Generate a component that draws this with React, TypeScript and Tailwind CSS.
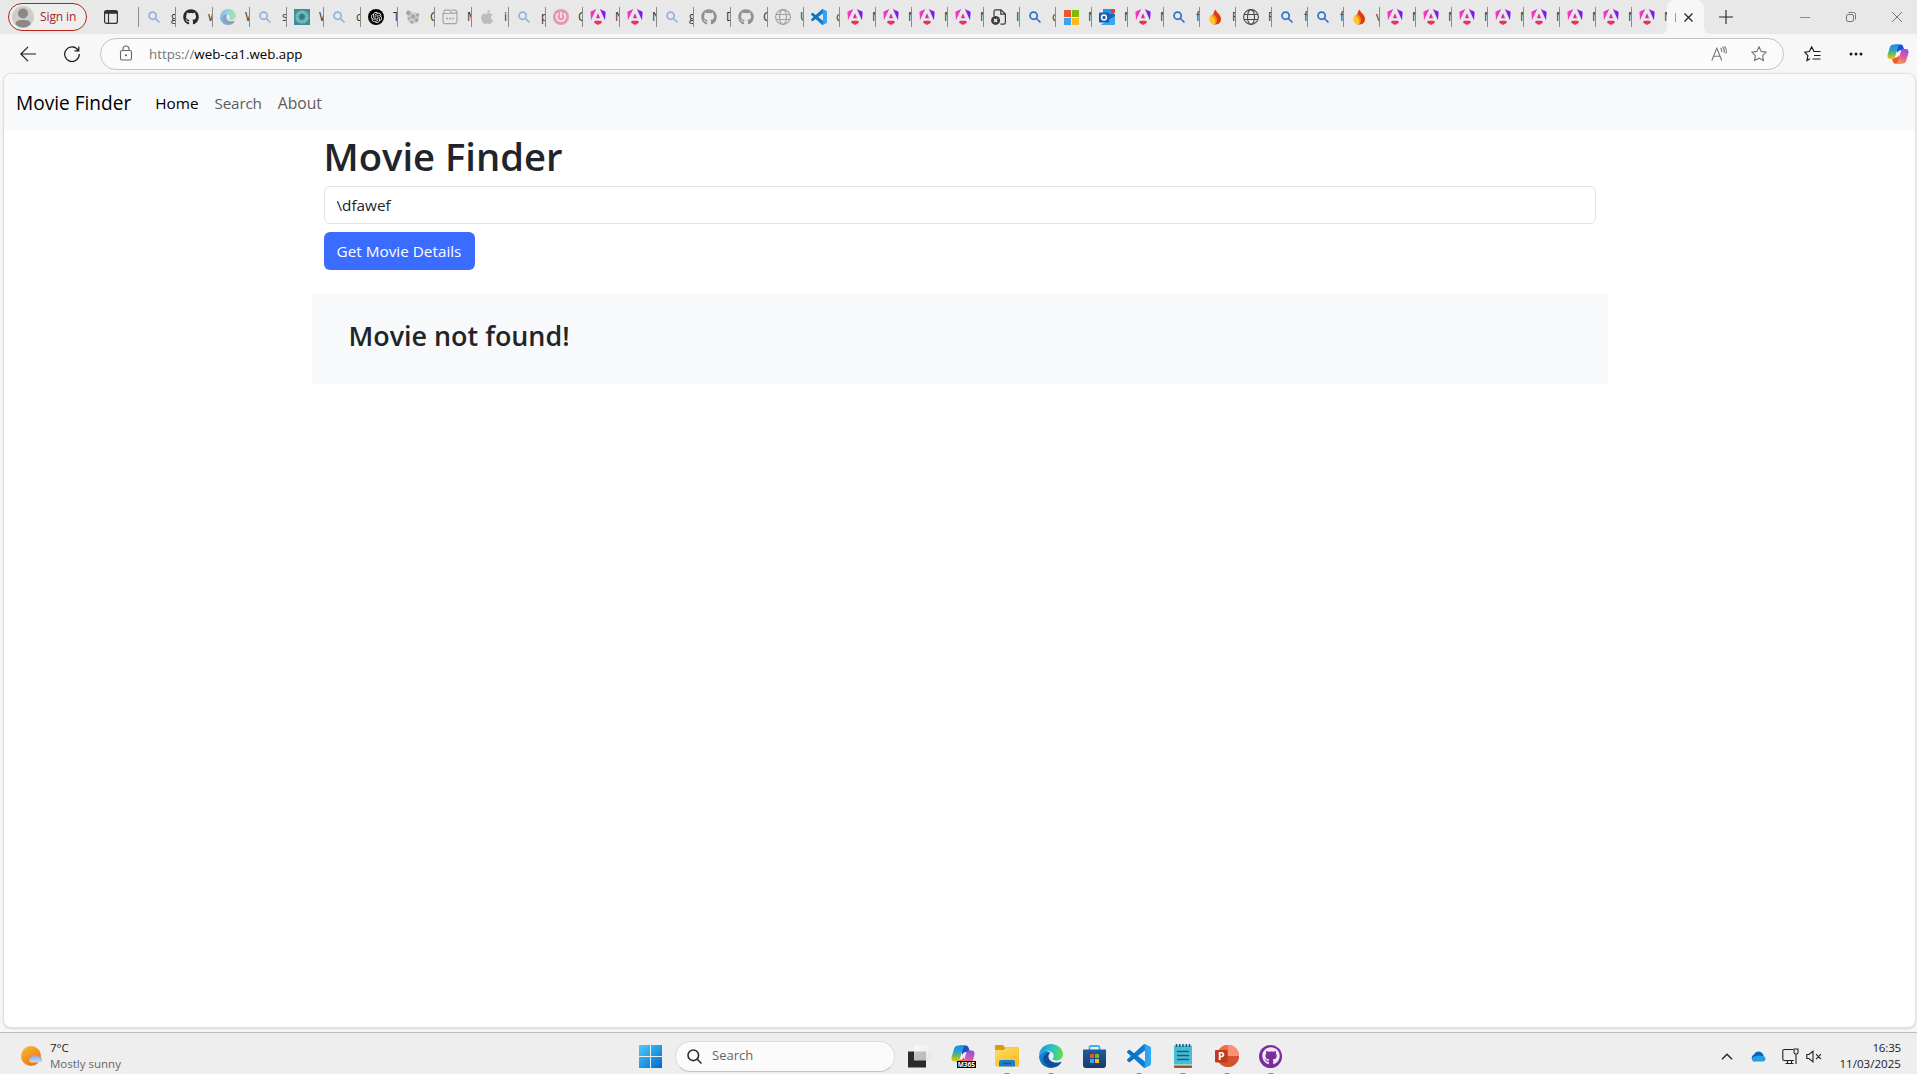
import React from "react";
import { FaGithub, FaApple } from "react-icons/fa";
import { SiOpenai } from "react-icons/si";

const Defs = () => (
  <svg width="0" height="0" className="absolute">
    <defs>
      <linearGradient id="ang" x1="0" y1="0" x2="1" y2="0">
        <stop offset="0" stopColor="#f637c2" /><stop offset="0.5" stopColor="#e62bb0" /><stop offset="0.75" stopColor="#a11df0" /><stop offset="1" stopColor="#6a0cf5" />
      </linearGradient>
      <linearGradient id="angb" x1="0" y1="0" x2="0" y2="1">
        <stop offset="0" stopColor="#c832a8" /><stop offset="1" stopColor="#f0304f" />
      </linearGradient>
      <linearGradient id="vsc" x1="0" y1="0" x2="1" y2="0">
        <stop offset="0" stopColor="#0a6fbe" /><stop offset="0.72" stopColor="#0f80cf" /><stop offset="0.76" stopColor="#2ba1f1" /><stop offset="1" stopColor="#36a9f7" />
      </linearGradient>
      <linearGradient id="edgeTop" x1="0" y1="0.3" x2="1" y2="0.4">
        <stop offset="0" stopColor="#1791d8" /><stop offset="0.5" stopColor="#2bc0cd" /><stop offset="1" stopColor="#5fdc56" />
      </linearGradient>
      <linearGradient id="edgeBot" x1="0" y1="0" x2="1" y2="1">
        <stop offset="0" stopColor="#1b93dc" /><stop offset="1" stopColor="#0c4a93" />
      </linearGradient>
      <linearGradient id="copL" x1="0" y1="0" x2="0" y2="1">
        <stop offset="0" stopColor="#1d8fe8" /><stop offset="0.4" stopColor="#2aa7c4" /><stop offset="0.7" stopColor="#7dc04a" /><stop offset="1" stopColor="#f6c21c" />
      </linearGradient>
      <linearGradient id="copR" x1="0.6" y1="0" x2="0.3" y2="1">
        <stop offset="0" stopColor="#9350e8" /><stop offset="0.5" stopColor="#e05aa4" /><stop offset="1" stopColor="#fb9c4b" />
      </linearGradient>
      <linearGradient id="win" x1="0" y1="0" x2="1" y2="1">
        <stop offset="0" stopColor="#4ccdfb" /><stop offset="1" stopColor="#0069ca" />
      </linearGradient>
      <linearGradient id="sun" x1="0.1" y1="0" x2="0.8" y2="1">
        <stop offset="0" stopColor="#f2bd35" /><stop offset="1" stopColor="#f06a12" />
      </linearGradient>
      <linearGradient id="cloud" x1="0" y1="0" x2="0" y2="1">
        <stop offset="0" stopColor="#7fa6e6" /><stop offset="1" stopColor="#c4dbfa" />
      </linearGradient>
      <linearGradient id="fold" x1="0" y1="0" x2="1" y2="1">
        <stop offset="0" stopColor="#fddb6a" /><stop offset="1" stopColor="#f9bb18" />
      </linearGradient>
      <linearGradient id="store" x1="0" y1="0" x2="0" y2="1">
        <stop offset="0" stopColor="#1d5c9e" /><stop offset="1" stopColor="#173a6b" />
      </linearGradient>
      <linearGradient id="glass" x1="0" y1="0" x2="1" y2="1">
        <stop offset="0" stopColor="#fff" stopOpacity=".75" /><stop offset="1" stopColor="#e2e2e2" stopOpacity=".75" />
      </linearGradient>
    </defs>
  </svg>
);

const Angular = () => (
  <svg viewBox="0 0 24 24" width="16" height="16">
    <path fill="url(#ang)" d="M14.692 0l7.832 16.855.814-12.856L14.692 0ZM9.308 0 .662 3.999l.814 12.856L9.308 0Z" />
    <path fill="url(#angb)" d="M16.712 17.711H7.288l-1.204 2.916L12 24l5.916-3.373-1.204-2.916ZM8.903 13.93h6.198L12 6.396 8.903 13.93Z" />
  </svg>
);
const Code = ({ size = 16 }: { size?: number }) => (
  <svg viewBox="0 0 24 24" width={size} height={size}>
    <path fill="url(#vsc)" d="M23.15 2.587L18.21.21a1.494 1.494 0 0 0-1.705.29l-9.46 8.63-4.12-3.128a.999.999 0 0 0-1.276.057L.327 7.261A1 1 0 0 0 .326 8.74L3.899 12 .326 15.26a1 1 0 0 0 .001 1.479L1.65 17.94a.999.999 0 0 0 1.276.057l4.12-3.128 9.46 8.63a1.492 1.492 0 0 0 1.704.29l4.942-2.377A1.5 1.5 0 0 0 24 20.06V3.939a1.5 1.5 0 0 0-.85-1.352zm-5.146 14.861L10.826 12l7.178-5.448v10.896z" />
  </svg>
);
const Edge = ({ size = 16 }: { size?: number }) => (
  <svg viewBox="0 0 24 24" width={size} height={size}>
    <path fill="url(#edgeBot)" d="M0 12C0 19 5.500 24 12 24c4.400 0 8.200-2.100 10.300-5.400.3-.5-.2-.9-.7-.7-5.600 2.400-12.300-.4-12.300-5.700 0-1.500.8-2.700 1.900-3.500C8 5.500 1.500 6.500 0 12z" />
    <path fill="url(#edgeTop)" d="M0 11.500C.3 5 5.500 0 12 0c7.200 0 12 5.200 12 10.200 0 3.800-3 6.300-6.600 6.300-2.300 0-3.800-.7-3.800-1.500 0-.7 1.100-1 1.100-3 0-2.700-2.800-5.200-6.900-5.200C4 6.800.5 9 0 11.500z" />
    <path fill="#0d4f9e" d="M4.300 14.800c.3-4 3-6.500 6.900-6.100-1.200.8-1.900 2-1.900 3.500 0 5.300 6.700 8.100 12.300 5.700-3 5.500-10 6.300-13.600 3.200-2.300-1.700-3.600-3.900-3.700-6.300z" />
  </svg>
);
const Mag = () => (
  <svg viewBox="0 0 16 16" width="16" height="16" fill="none" stroke="#2f6fd0" strokeWidth="1.7" strokeLinecap="round">
    <circle cx="6.600" cy="6.700" r="3.600" /><path d="M9.400 9.500l3.600 3.500" />
  </svg>
);
const Globe = () => (
  <svg viewBox="0 0 16 16" width="16" height="16" fill="none" stroke="#4a4a4a" strokeWidth="1.100">
    <circle cx="8" cy="8" r="7.400" /><ellipse cx="8" cy="8" rx="3.500" ry="7.400" /><path d="M1.200 5.500h13.600M1.200 10.500h13.600" />
  </svg>
);
const Teal = () => (
  <svg viewBox="0 0 16 16" width="16" height="16">
    <rect width="16" height="16" fill="#3f8c98" />
    <circle cx="8" cy="8" r="5" fill="none" stroke="#8fc9cc" strokeWidth="3.200" strokeDasharray="1.100 .5" />
    <path d="M8 5.500a2 2 0 0 1 1 3.700L8 11l-1-1.800a2 2 0 0 1 1-3.700z" fill="#2d7683" />
  </svg>
);
const OpenAI = () => (
  <span className="flex size-4 shrink-0 items-center justify-center rounded-full bg-black text-white"><SiOpenai size={11} /></span>
);
const Ball = () => (
  <svg viewBox="0 0 16 16" width="16" height="16" fill="#555">
    <circle cx="8" cy="9" r="6" fill="#b5b5b5" /><circle cx="3.500" cy="4" r="2.400" /><circle cx="8" cy="7.500" r="2.300" /><circle cx="12.500" cy="6" r="1.800" /><circle cx="4" cy="9.500" r="1.300" /><circle cx="11.500" cy="11" r="1.900" /><circle cx="7" cy="13" r="1.600" />
  </svg>
);
const Site = () => (
  <svg viewBox="0 0 16 16" width="16" height="16" fill="none" stroke="#555" strokeWidth="1.200">
    <path d="M1.800 4.500V3a2 2 0 0 1 2-1.800H8l1.500 3h5M15 5v7.200a2.500 2.500 0 0 1-2.500 2.500h-9A2.500 2.500 0 0 1 1 12.200V4.500h8.500M9.500 1.200h3A2.500 2.500 0 0 1 15 3.700V6" />
    <path d="M4 9.500h2M7 9.500h2M10 9.500h2" strokeWidth="1.600" />
  </svg>
);
const Pink = () => (
  <svg viewBox="0 0 16 16" width="16" height="16">
    <circle cx="8" cy="8" r="8" fill="#e8357a" />
    <path d="M5.400 4.300a4.400 4.400 0 1 0 5.200 0M8 3v6" fill="none" stroke="#fff" strokeWidth="1.600" />
  </svg>
);
const DocX = () => (
  <svg viewBox="0 0 16 16" width="16" height="16" fill="none" stroke="#3b3b3b" strokeWidth="1.200">
    <path d="M3 7V2.500A1.800 1.800 0 0 1 4.800.8H10L14.400 5v8.500a1.800 1.800 0 0 1-1.800 1.700H9.500M9.800 1v4.200h4.400" />
    <circle cx="4.600" cy="11.400" r="4.500" fill="#3b3b3b" stroke="none" /><path d="M3 9.800l3.200 3.200M6.200 9.800L3 13" stroke="#fff" />
  </svg>
);
const MS = () => (
  <svg viewBox="0 0 15 15" width="15" height="15">
    <path fill="#f05427" d="M0 0h7v7H0z" /><path fill="#80bb0c" d="M8 0h7v7H8z" /><path fill="#3fa2ee" d="M0 8h7v7H0z" /><path fill="#fcba1c" d="M8 8h7v7H8z" />
  </svg>
);
const Outlook = () => (
  <svg viewBox="0 0 16 16" width="16" height="16">
    <path fill="#2f92e0" d="M4 0h11v12H4z" /><path fill="#1b66b4" d="M9 5h7v5l-7 4z" /><path fill="#3aa8ef" d="M2 15.500L16 7v7.500a1.300 1.300 0 0 1-1.300 1.500H3z" />
    <rect y="3.500" width="10" height="10" rx="1" fill="#1c5bab" /><circle cx="5" cy="8.500" r="2.400" fill="none" stroke="#fff" strokeWidth="1.500" />
    <circle cx="14" cy="2" r="2.200" fill="#d8413a" />
  </svg>
);
const Fire = () => (
  <svg viewBox="0 0 16 16" width="16" height="16">
    <path fill="#dd3a13" d="M8 .5c1.500 1.500 1.500 2.300 2.800 3.500C13 6 14 8 14 10a5.500 5.500 0 0 1-8 5C3 10 6 7 8 .5z" />
    <path fill="#f8851b" d="M6.500 5C9 7 10.500 9.500 10 12c-.2 1.700-1.200 3-2.500 3.500L3 12l1-5z" /><path fill="#fcc52d" d="M4 6.500c3 1 5 4.500 4 9A5.700 5.700 0 0 1 2.200 10c0-1.500.8-2.700 1.800-3.500z" />
  </svg>
);

const icons: Record<string, React.ReactNode> = {
  mag: <Mag />, git: <FaGithub size={16} color="#24292f" />, edge: <Edge />, teal: <Teal />, ai: <OpenAI />, ball: <Ball />, site: <Site />,
  apple: <FaApple size={16} color="#888" />, pink: <Pink />, ang: <Angular />, globe: <Globe />, code: <Code />, doc: <DocX />, ms: <MS />, out: <Outlook />, fire: <Fire />,
};

// [icon, visible title, sleeping]
const wide: [string, string, boolean][] = [
  ["mag", "g", true], ["git", "w", false], ["edge", "W", true], ["mag", "s", true], ["teal", "W", false], ["mag", "c", true], ["ai", "T", false],
  ["ball", "C", true], ["site", "M", true], ["apple", "ii", true], ["mag", "p", true], ["pink", "C", true], ["ang", "N", false], ["ang", "N", false],
  ["mag", "g", true], ["git", "D", true], ["git", "C", true],
];
const slim: [string, string, boolean][] = [
  ["globe", "U", true], ["code", "c", false], ["ang", "N", false], ["ang", "N", false], ["ang", "N", false], ["ang", "N", false], ["doc", "I", false],
  ["mag", "c", false], ["ms", "N", false], ["out", "N", false], ["ang", "N", false], ["mag", "f", false], ["fire", "F", false], ["globe", "F", false],
  ["mag", "f", false], ["mag", "f", false], ["fire", "v", false], ["ang", "N", false], ["ang", "N", false], ["ang", "N", false], ["ang", "N", false],
  ["ang", "N", false], ["ang", "N", false], ["ang", "N", false], ["ang", "N", false],
];

const Tab = ({ t, width, last }: { t: [string, string, boolean]; width: string; last?: boolean }) => (
  <div className={`flex h-5 shrink-0 items-center overflow-hidden border-r pl-[7px] ${last ? "border-transparent" : "border-[#8a8a8a]"} ${width}`}>
    <span className={`flex w-4 shrink-0 justify-center ${t[2] ? "opacity-45" : ""}`}>{icons[t[0]]}</span>
    <span className="ml-[9px] shrink-0 text-[12px] leading-5 text-[#333]">{t[1]}</span>
  </div>
);

const Copilot = ({ size }: { size: number }) => (
  <svg viewBox="0 0 24 24" width={size} height={size}>
    <path fill="#1e4fd0" d="M9 1.500h6c1.500 0 2.200 1 2.600 2.300L19 8h-4c-2 0-3 1-3.500 3z" />
    <path fill="#ee5a2c" d="M15 22.500H9c-1.500 0-2.200-1-2.600-2.300L5 16h4c2 0 3-1 3.500-3z" />
    <path fill="url(#copL)" d="M7.500 1.500H15c-1.500 0-2.300 1-2.800 2.600L8.600 15.500c-.4 1.300-1.100 2-2.500 2H3.500C1 17.500 0 15.500.6 13L3 5c.7-2.300 2-3.500 4.500-3.500z" />
    <path fill="url(#copR)" d="M16.500 22.500H9c1.500 0 2.300-1 2.800-2.600l3.600-11.400c.4-1.300 1.100-2 2.500-2h2.600c2.500 0 3.500 2 2.900 4.500L21 19c-.7 2.300-2 3.500-4.500 3.500z" />
  </svg>
);

const TabStrip = () => (
  <div className="flex h-[34px] items-center bg-[#e8e8e8]">
    <div className="ml-2 flex h-7 w-[79px] shrink-0 items-center rounded-full border border-[#b3261e] bg-[#efeeee] pl-[3px]">
      <svg viewBox="0 0 22 22" width="22" height="22"><circle cx="11" cy="11" r="11" fill="#cfcdca" /><circle cx="11" cy="7.500" r="5" fill="#8c8883" /><path d="M3.500 18.500c0-3.500 2-4.500 7.500-4.500s7.500 1 7.500 4.500a11 11 0 0 1-15 0z" fill="#8c8883" /></svg>
      <span className="ml-[6px] text-[12px] tracking-[-0.1px] text-[#a4262c]">Sign in</span>
    </div>
    <svg viewBox="0 0 14 14" width="14" height="14" className="ml-[17px] shrink-0" fill="none" stroke="#333" strokeWidth="1.200"><rect x=".6" y=".6" width="12.800" height="12.800" rx="2" /><path d="M.6 2.300h12.800" strokeWidth="3" /><path d="M4.500 3v10.500" /></svg>
    <div className="ml-5 flex items-center border-l border-[#8a8a8a]">
      {wide.map((t, i) => <Tab key={i} t={t} width="w-[37px]" />)}
      {slim.map((t, i) => <Tab key={i} t={t} width="w-[36px]" last={i === slim.length - 1} />)}
    </div>
    <div className="relative -ml-px flex h-[34px] w-[37px] shrink-0 items-center rounded-t-lg bg-[#f7f7f7]">
      <svg className="absolute bottom-0 -left-[6px]" width="6" height="6"><path d="M6 0v6H0a6 6 0 0 0 6-6z" fill="#f7f7f7" /></svg>
      <svg className="absolute bottom-0 -right-[6px]" width="6" height="6"><path d="M0 0v6h6a6 6 0 0 1-6-6z" fill="#f7f7f7" /></svg>
      <span className="ml-2 h-[9px] w-px bg-[#999]" />
      <svg className="ml-[8px]" width="9" height="9" stroke="#222" strokeWidth="1.200"><path d="M.5.5l8 8M8.500.5l-8 8" /></svg>
    </div>
    <svg className="ml-[15px] shrink-0" width="14" height="14" stroke="#222" strokeWidth="1.100"><path d="M7 0v14M0 7h14" /></svg>
    <div className="ml-auto mr-[15px] flex shrink-0 items-center gap-9">
      <svg width="10" height="10" stroke="#888" strokeWidth="1"><path d="M0 5.500h10" /></svg>
      <svg width="10" height="10" stroke="#777" fill="none"><rect x=".5" y="2.500" width="7" height="7" rx="1.500" /><path d="M2.500.5h5a2 2 0 0 1 2 2v5" /></svg>
      <svg width="10" height="10" stroke="#777"><path d="M0 0l10 10M10 0L0 10" /></svg>
    </div>
  </div>
);

const star = "M8 .8l2.200 4.600 5 .7-3.600 3.500.9 5L8 12.200l-4.500 2.400.9-5L.8 6.100l5-.7z";

const Toolbar = () => (
  <div className="flex h-[39px] items-center bg-[#f7f7f7]">
    <svg className="ml-5 shrink-0" width="16" height="16" fill="none" stroke="#1b1b1b" strokeWidth="1.200"><path d="M16 8H1M8 .8L.8 8 8 15.200" /></svg>
    <svg className="ml-7 shrink-0" width="16" height="16" fill="none" stroke="#1b1b1b" strokeWidth="1.200"><path d="M14.300 4.500A7.300 7.300 0 1 0 15.300 8M14.800.5v4.300h-4.300" /></svg>
    <div className="ml-5 flex h-8 w-[1684px] shrink-0 items-center rounded-full border border-[#c3c3c3] bg-[#fbfbfb]">
      <svg className="ml-[18px] -mt-px" width="14" height="16" fill="none" stroke="#666" strokeWidth="1.100"><rect x="1.500" y="5.500" width="11" height="9.500" rx="1.500" /><path d="M4 5.500V4a3 3 0 0 1 6 0v1.500" /><circle cx="7" cy="10.300" r=".5" fill="#666" /></svg>
      <span className="ml-4 text-[13.3px] leading-5 text-black"><span className="text-[#767676]">https://</span>web-ca1.web.app</span>
      <svg className="ml-auto" width="16" height="16" fill="none" stroke="#767676" strokeWidth="1.100"><path d="M.8 14.500L5.800 2.200l5 12.300M2.500 10.300h6.600M9.500 1.800c1 1 1.300 2.400 1 4M11.500.8c1.600 1.600 2 4 1.400 6.200M13.300.2c2 2 2.500 4.600 1.700 7.500" /></svg>
      <svg className="ml-6 mr-4" width="16" height="16" fill="none" stroke="#767676" strokeWidth="1.100"><path d={star} /></svg>
    </div>
    <svg className="ml-5 shrink-0" width="17" height="16" fill="none" stroke="#1b1b1b" strokeWidth="1.200"><path d="M6 12.800l-3 1.700.9-4.900L.7 6.200l4.700-.7L7.700.9 10 5.500h6.500M10 9.500h6.500M8.500 13h8" /></svg>
    <svg className="ml-7 shrink-0" width="14" height="4" fill="#1b1b1b"><circle cx="2" cy="2" r="1.500" /><circle cx="7" cy="2" r="1.500" /><circle cx="12" cy="2" r="1.500" /></svg>
    <span className="ml-6 shrink-0"><Copilot size={22} /></span>
  </div>
);

const Slot = ({ children, run }: { children: React.ReactNode; run?: boolean }) => (
  <div className="relative flex h-[42px] w-11 shrink-0 items-center justify-center pt-[5px]">
    {children}
    {run && <span className="absolute bottom-0 left-[19px] h-[2px] w-[6px] rounded-t bg-[#868686]" />}
  </div>
);

const Taskbar = () => (
  <div className="relative flex h-[42px] items-center justify-between overflow-hidden border-t border-[#bdbdbd] bg-[#eeeeee]">
    <div className="flex w-[628px] items-center pl-[21px] pt-[5px]">
      <svg width="22" height="21" viewBox="0 0 22 21"><circle cx="10" cy="10" r="10" fill="url(#sun)" /><path d="M10.500 16.500a2.500 2.500 0 0 1 .3-5A4 4 0 0 1 18 10.800a2.900 2.900 0 0 1 1 5.700z" fill="url(#cloud)" /></svg>
      <div className="ml-[7px] flex flex-col text-[11.5px] leading-4">
        <span className="text-[#1b1b1b]">7°C</span>
        <span className="text-[#666]">Mostly sunny</span>
      </div>
    </div>
    <div className="flex flex-1 items-center">
      <Slot><svg width="23" height="23" fill="url(#win)"><path d="M0 0h11v11H0zM12 0h11v11H12zM0 12h11v11H0zM12 12h11v11H12z" /></svg></Slot>
      <div className="ml-[3px] mt-[5px] flex h-[31px] w-[220px] items-center rounded-full border border-[#dcdcdc] border-b-[#c4c4c4] bg-[#fbfbfb] pl-[11px]">
        <svg width="15" height="15" fill="none" stroke="#2b2b2b" strokeWidth="1.600" strokeLinecap="round"><circle cx="6.300" cy="6.300" r="5.300" /><path d="M10.300 10.300l3.700 3.700" /></svg>
        <span className="ml-[10px] text-[13px] text-[#666]">Search</span>
      </div>
      <div className="ml-[2px] flex">
        <Slot><svg width="24" height="23" className="ml-[2px]"><path d="M0 6.500h18v16H0z" fill="#2b2b2b" /><path d="M6 .5h18v15H6z" fill="url(#glass)" /></svg></Slot>
        <Slot>
          <div className="relative size-6"><Copilot size={24} /><span className="absolute -right-px bottom-0 bg-black px-px text-[6.500px] font-bold leading-[7px] text-white">M365</span></div>
        </Slot>
        <Slot run><svg width="24" height="22"><path d="M0 1a1 1 0 0 1 1-1h7l2 2.500h13a1 1 0 0 1 1 1V8H0z" fill="#dd9a0b" /><path d="M0 5h8.500L11 2.700h12a1 1 0 0 1 1 1V20.500a1 1 0 0 1-1 1H1a1 1 0 0 1-1-1z" fill="url(#fold)" /><path d="M4 21.500V17a2 2 0 0 1 2-2h12a2 2 0 0 1 2 2v4.500z" fill="#1c7cd0" /><path d="M8 18.500h8" stroke="#0e5aa0" strokeWidth="1.500" /></svg></Slot>
        <Slot run><Edge size={24} /></Slot>
        <Slot><svg width="23" height="23" className="-ml-px"><path d="M6.500 6V2.500A1.500 1.500 0 0 1 8 1h7a1.500 1.500 0 0 1 1.500 1.500V6" fill="none" stroke="#35b4ee" strokeWidth="1.800" /><path d="M0 4.500h23V20a3 3 0 0 1-3 3H3a3 3 0 0 1-3-3z" fill="url(#store)" /><path d="M7 9h4v4H7z" fill="#f25022" /><path d="M12 9h4v4h-4z" fill="#7fba00" /><path d="M7 14h4v4H7z" fill="#35a9f0" /><path d="M12 14h4v4h-4z" fill="#ffb900" /></svg></Slot>
        <Slot run><Code size={24} /></Slot>
        <Slot run><svg width="20" height="24"><rect x="1" y="1.500" width="18" height="20" rx="1" fill="#46bcd6" /><path d="M3.500 0v3M6.800 0v3M10 0v3M13.300 0v3M16.500 0v3" stroke="#14607b" strokeWidth="1.500" /><path d="M4 7.500h12M4 11.500h12M4 15.500h12" stroke="#14607b" strokeWidth="1.600" /><path d="M1 20.500h18v1H1z" fill="#e6f4f8" /><path d="M1 21.500h18V23a1 1 0 0 1-1 1H2a1 1 0 0 1-1-1z" fill="#a3501c" /></svg></Slot>
        <Slot run><svg width="24" height="22"><circle cx="13" cy="11" r="11" fill="#e0532f" /><path d="M13 0a11 11 0 0 1 11 11H13z" fill="#fb9275" /><path d="M13 11h11a11 11 0 0 1-21 4.500z" fill="#d35230" /><path d="M13 0v11H2A11 11 0 0 1 13 0z" fill="#ee6c47" /><rect y="5" width="12.500" height="12.500" rx="1" fill="#c13b1b" /><text x="3" y="15" fontSize="10.500" fontWeight="700" fill="#fff" fontFamily="Open Sans">P</text></svg></Slot>
        <Slot run><span className="-ml-px flex size-[23px] items-center justify-center rounded-full bg-[#7b2d9e]"><FaGithub size={18} color="#f3e8f8" /></span></Slot>
      </div>
    </div>
    <div className="flex items-center pr-4 pt-[5px]">
      <svg width="12" height="7" fill="none" stroke="#222" strokeWidth="1.400"><path d="M1 6.300l5-5 5 5" /></svg>
      <svg className="ml-[17px]" width="17" height="11"><path d="M4 10.500a3.800 3.800 0 0 1 0-7A5 5 0 0 1 13 3l1 3-9 4.500z" fill="#0f62b9" /><path d="M3.500 10.500A3 3 0 0 1 3 6l5-1.500L13.500 5a2.900 2.900 0 0 1 0 5.500z" fill="#249fe8" /></svg>
      <svg className="ml-[15px]" width="17" height="17" fill="none" stroke="#222" strokeWidth="1.100"><path d="M11 1.500H2A1.200 1.200 0 0 0 .8 2.700v8.600A1.200 1.200 0 0 0 2 12.500h10M5.500 12.500v3M9.500 12.500v3M3.500 15.500h8M12 1h4v3.500a1.500 1.500 0 0 1-1.500 1.500h-1A1.500 1.500 0 0 1 12 4.500zM14 6v10" /></svg>
      <svg className="ml-[7px]" width="17" height="13" fill="none" stroke="#222" strokeWidth="1.100"><path d="M.8 4.500v4H3l4 3.300V1.200L3 4.500zM10 4.200l5 5M15 4.200l-5 5" /></svg>
      <div className="ml-4 flex flex-col items-end text-[11.6px] leading-4 text-[#1b1b1b]">
        <span className="tracking-[-0.2px]">16:35</span>
        <span>11/03/2025</span>
      </div>
    </div>
  </div>
);

export default function App() {
  return (
    <div className="flex h-[1074px] w-[1917px] flex-col overflow-hidden bg-[#f7f7f7] font-['Open_Sans','Noto_Sans',sans-serif]">
      <Defs />
      <TabStrip />
      <Toolbar />
      <div className="mx-[3px] mr-px mb-1 flex-1 overflow-hidden rounded-lg border border-[#e0e0e0] bg-white shadow-sm">
        <nav className="flex h-14 items-center bg-[#f8f9fa] pl-3 pt-[2px]">
          <span className="text-[19.1px] leading-[30px] text-black">Movie Finder</span>
          <div className="ml-6 flex gap-4 text-[15.3px] leading-6 text-[#5c5d5e]">
            <span className="text-black">Home</span>
            <span className="tracking-[-0.2px]">Search</span>
            <span className="text-[15.700px]">About</span>
          </div>
        </nav>
        <main className="mx-auto w-[1296px] text-[#212529]">
          <div className="px-3">
            <h1 className="h-12 pt-[2px] text-[38.200px] font-semibold leading-[48px]">Movie Finder</h1>
            <input className="mt-2 block h-[38px] w-full rounded-md border border-[#dee2e6] px-3 text-[15.300px] outline-none" defaultValue={"\\dfawef"} />
            <button className="mt-2 h-[38px] w-[151px] rounded-md bg-[#3a6cff] text-[15.300px] whitespace-nowrap text-white">Get Movie Details</button>
          </div>
          <section className="mt-6 h-[90px] bg-[#f8f9fa] pl-[37px] pt-[25px]">
            <h3 className="text-[26.900px] font-semibold leading-[34px]">Movie not found!</h3>
          </section>
        </main>
      </div>
      <Taskbar />
    </div>
  );
}
